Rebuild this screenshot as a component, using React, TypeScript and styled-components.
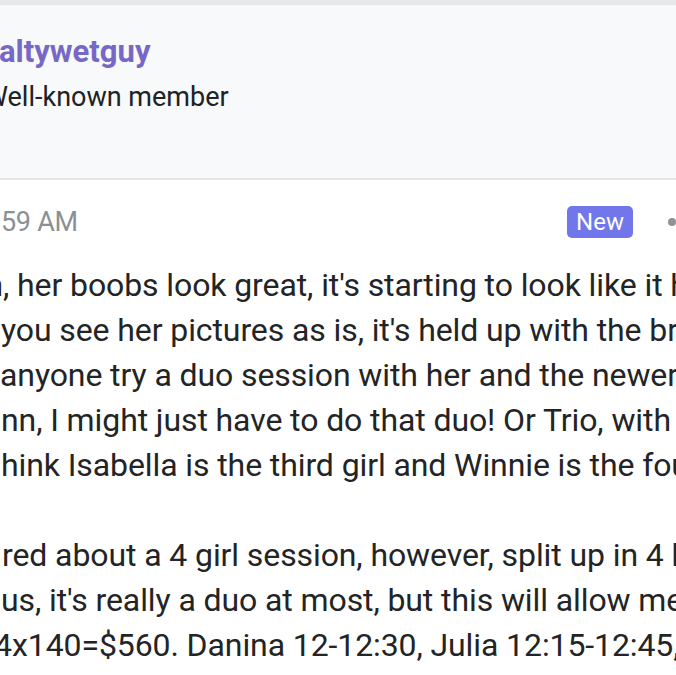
import React from "react";
import styled, { createGlobalStyle } from "styled-components";

const Global = createGlobalStyle`
  html, body { margin: 0; padding: 0; background: #ffffff; overflow: hidden; }
  body { font-family: Roboto, "Noto Sans", "Liberation Sans", sans-serif; }
`;

const Page = styled.div`
  width: 676px;
  height: 675px;
  overflow: hidden;
  background: #ffffff;
  display: flex;
  flex-direction: column;
`;

const TopBand = styled.div`
  height: 5px;
  flex: none;
  background: #e6e8ea;
`;

const UserBlock = styled.div`
  flex: none;
  height: 175px;
  background: #f7f9fa;
  border-bottom: 2px solid #e3e5e7;
  display: flex;
  flex-direction: column;
  padding: 24px 0 0 0;
  box-sizing: border-box;
`;

const UserColumn = styled.div`
  margin-left: -17px;
  display: flex;
  flex-direction: column;
`;

const Username = styled.div`
  font-size: 31px;
  line-height: 46px;
  font-weight: 700;
  color: #7767c6;
  white-space: nowrap;
`;

const UserTitle = styled.div`
  font-size: 27px;
  line-height: 44px;
  color: #202224;
  white-space: nowrap;
  padding-left: 1px;
`;

const MetaRow = styled.div`
  flex: none;
  height: 83px;
  display: flex;
  align-items: center;
  justify-content: space-between;
`;

const Timestamp = styled.div`
  font-size: 27px;
  color: #8b9095;
  letter-spacing: -0.3px;
  white-space: nowrap;
  display: flex;
  padding-left: 1px;
`;

const MetaRight = styled.div`
  display: flex;
  align-items: center;
  gap: 35px;
  margin-right: 0;
`;

const NewBadge = styled.span`
  display: inline-flex;
  align-items: center;
  justify-content: center;
  height: 32px;
  padding: 0 9px;
  border-radius: 5px;
  background: #7176ea;
  color: #ffffff;
  font-size: 24px;
`;

const Dot = styled.span`
  width: 8px;
  height: 8px;
  border-radius: 50%;
  background: #8f9499;
`;

const Body = styled.div`
  flex: none;
  display: flex;
  flex-direction: column;
  font-size: 32px;
  line-height: 45px;
  color: #222426;
  letter-spacing: -0.1px;
`;

const Line = styled.div<{ $indent?: number }>`
  white-space: nowrap;
  height: 45px;
  padding-left: ${(p) => p.$indent ?? 0}px;
  display: flex;
`;

const Cut = styled.span<{ $w: number }>`
  display: inline-flex;
  justify-content: flex-end;
  width: ${(p) => p.$w}px;
  overflow: hidden;
  flex: none;
`;

const Rest = styled.span`
  white-space: pre;
`;

export default function App() {
  return (
    <Page>
      <Global />
      <TopBand />
      <UserBlock>
        <UserColumn>
          <Username>saltywetguy</Username>
          <UserTitle>Well-known member</UserTitle>
        </UserColumn>
      </UserBlock>
      <MetaRow>
        <Timestamp>
          <Rest>59 AM</Rest>
        </Timestamp>
        <MetaRight>
          <NewBadge>New</NewBadge>
          <Dot />
        </MetaRight>
      </MetaRow>
      <Body>
        <Line>
          <Cut $w={3}>h</Cut>
          <Rest>, her boobs look great, it's starting to look like it has</Rest>
        </Line>
        <Line $indent={1}>
          <Rest>you see her pictures as is, it's held up with the bra</Rest>
        </Line>
        <Line>
          <Rest>anyone try a duo session with her and the newer girl</Rest>
        </Line>
        <Line $indent={1}>
          <Rest>nn, I might just have to do that duo! Or Trio, with Winnie</Rest>
        </Line>
        <Line $indent={1}>
          <Rest>hink Isabella is the third girl and Winnie is the fourth</Rest>
        </Line>
        <Line />
        <Line $indent={2}>
          <Rest>red about a 4 girl session, however, split up in 4 half</Rest>
        </Line>
        <Line $indent={1}>
          <Rest>us, it's really a duo at most, but this will allow me to</Rest>
        </Line>
        <Line>
          <Cut $w={12}>4</Cut>
          <Rest>x140=$560. Danina 12-12:30, Julia 12:15-12:45, Isabella</Rest>
        </Line>
        <Line $indent={1}>
          <Rest>12:30-1:00, Winnie 12:45-1:15. That's the plan for now</Rest>
        </Line>
      </Body>
    </Page>
  );
}
